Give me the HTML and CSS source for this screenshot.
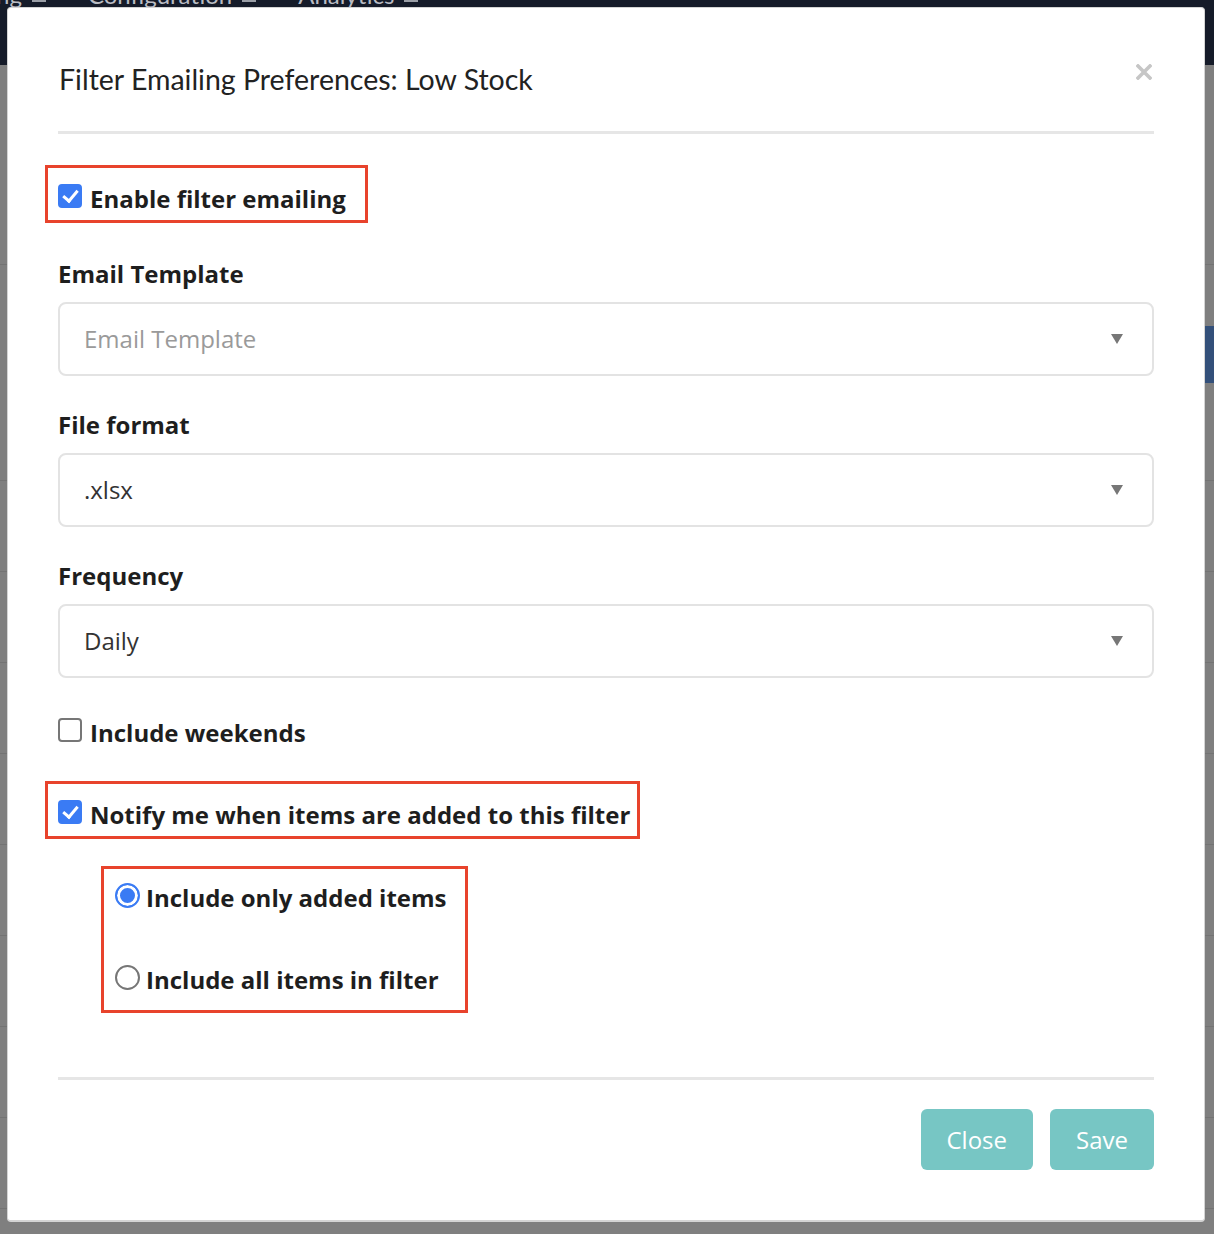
FILE: index.html
```html
<!DOCTYPE html>
<html lang="en">
<head>
<meta charset="utf-8">
<title>Filter Emailing Preferences</title>
<link rel="stylesheet" href="styles.css">
</head>
<body>
<div class="page">
  <div class="topnav">
    <span class="nav-item nav-first">ng <span class="caret"></span></span>
    <span class="nav-item">Configuration <span class="caret"></span></span>
    <span class="nav-item">Analytics <span class="caret"></span></span>
  </div>
  <div class="bg-content">
    <div class="bg-head"></div>
    <div class="bg-row bg-row-tall"><div class="bg-btn">/</div></div>
    <div class="bg-row"></div>
    <div class="bg-row"></div>
    <div class="bg-row"></div>
    <div class="bg-row"></div>
    <div class="bg-row"></div>
    <div class="bg-row"></div>
    <div class="bg-row"></div>
    <div class="bg-row"></div>
  </div>
</div>

<div class="modal" role="dialog">
  <div class="modal-header">
    <h4 class="modal-title">Filter Emailing Preferences: Low Stock</h4>
    <button class="modal-close" aria-label="Close">
      <svg width="16" height="16" viewBox="0 0 16 16"><path d="M2 2 L14 14 M14 2 L2 14" stroke="#c6c6c6" stroke-width="3.6" stroke-linecap="square"/></svg>
    </button>
  </div>
  <div class="divider"></div>

  <div class="modal-body">
    <div class="highlight hl-enable">
      <label class="check-row"><input type="checkbox" class="cb" checked> Enable filter emailing</label>
    </div>

    <div class="form-group first-group">
      <div class="field-label">Email Template</div>
      <div class="select"><span class="placeholder">Email Template</span><span class="arrow"></span></div>
    </div>

    <div class="form-group">
      <div class="field-label">File format</div>
      <div class="select"><span class="value">.xlsx</span><span class="arrow"></span></div>
    </div>

    <div class="form-group">
      <div class="field-label">Frequency</div>
      <div class="select"><span class="value">Daily</span><span class="arrow"></span></div>
    </div>

    <label class="check-row weekends"><input type="checkbox" class="cb"> Include weekends</label>

    <div class="highlight hl-notify">
      <label class="check-row"><input type="checkbox" class="cb" checked> Notify me when items are added to this filter</label>
    </div>

    <div class="highlight hl-radios">
      <label class="check-row radio-row"><input type="radio" name="mode" class="rb" checked> Include only added items</label>
      <label class="check-row radio-row second"><input type="radio" name="mode" class="rb"> Include all items in filter</label>
    </div>
  </div>

  <div class="divider footer-divider"></div>
  <div class="modal-footer">
    <button class="btn">Close</button>
    <button class="btn">Save</button>
  </div>
</div>
</body>
</html>
```

FILE: styles.css
```css
html, body {
  margin: 0;
  padding: 0;
}
body {
  width: 1214px;
  height: 1234px;
  overflow: hidden;
  background: #7f7f7f;
  font-family: "Open Sans", "Noto Sans", sans-serif;
  position: relative;
}
.page {
  height: 1234px;
  overflow: hidden;
}

/* background page (dimmed) */
.topnav {
  height: 65px;
  background: #151b29;
  display: flex;
  align-items: flex-start;
  overflow: hidden;
  font-family: Lato, "Open Sans", sans-serif;
  font-size: 24px;
  color: #b9bcc3;
  line-height: 24px;
}
.nav-item {
  margin-top: -17px;
  margin-right: 42px;
  white-space: nowrap;
  display: flex;
  align-items: center;
}
.nav-first { margin-left: -4px; }
.caret {
  display: inline-block;
  width: 14px;
  height: 2px;
  margin-left: 10px;
  margin-top: 12px;
  background: #9a9ea6;
}
.bg-content { display: flex; flex-direction: column; }
.bg-head { height: 199px; border-bottom: 1px solid #737373; }
.bg-row {
  height: 90px;
  border-bottom: 1px solid #737373;
  display: flex;
  justify-content: flex-end;
}
.bg-row-tall { height: 215px; }
.bg-btn {
  margin-top: 61px;
  width: 120px;
  height: 57px;
  margin-right: -20px;
  background: #33507a;
  color: #8c9ab0;
  font-size: 30px;
  line-height: 57px;
  padding-left: 4px;
  box-sizing: border-box;
}

/* modal */
.modal {
  position: absolute;
  top: 7px;
  left: 7px;
  width: 1198px;
  box-sizing: border-box;
  background: #fff;
  border: 1px solid #d4d4d4;
  border-bottom-width: 2px;
  border-radius: 4px;
  padding: 54px 50px 50px;
  color: #222;
}
.modal-header {
  display: flex;
  justify-content: space-between;
  align-items: flex-start;
}
.modal-title {
  margin: 0;
  font-family: Lato, "Open Sans", sans-serif;
  font-weight: 400;
  font-size: 28.5px;
  line-height: 34px;
  color: #222;
  padding-left: 1px;
}
.modal-close {
  border: 0;
  background: none;
  padding: 0;
  margin-top: 2px;
  margin-right: 2px;
  width: 16px;
  height: 16px;
  display: flex;
}
.divider {
  height: 3px;
  background: #e6e6e6;
  margin-top: 35px;
}

.modal-body {
  padding-top: 31px;
  display: flex;
  flex-direction: column;
  align-items: flex-start;
}
.highlight {
  border: 3px solid #e8432c;
  box-sizing: border-box;
}
.hl-enable {
  margin-left: -13px;
  padding: 16px 19px 6px 10px;
}
.hl-notify {
  margin-left: -13px;
  margin-top: 33px;
  padding: 16px 7px 6px 10px;
}
.hl-radios {
  margin-left: 43px;
  margin-top: 27px;
  padding: 14px 18px 15px 11px;
  display: flex;
  flex-direction: column;
}

.check-row {
  display: flex;
  align-items: flex-start;
  gap: 8px;
  font-weight: 700;
  font-size: 24px;
  line-height: 30px;
  color: #1e1e1e;
  white-space: nowrap;
}
.radio-row { gap: 6px; }
.radio-row.second { margin-top: 52px; }
.weekends { margin-top: 40px; }

.cb {
  appearance: none;
  -webkit-appearance: none;
  margin: 0;
  width: 24px;
  height: 24px;
  box-sizing: border-box;
  border: 2px solid #767676;
  border-radius: 4px;
  background: #fff;
  position: relative;
  flex: none;
}
.cb:checked {
  background: #3a7bf4;
  border-color: #3a7bf4;
}
.cb:checked::after {
  content: "";
  position: absolute;
  left: 6px;
  top: 1px;
  width: 6px;
  height: 12px;
  border-right: 3.5px solid #fff;
  border-bottom: 3.5px solid #fff;
  transform: rotate(40deg);
}
.rb {
  appearance: none;
  -webkit-appearance: none;
  margin: 0;
  width: 25px;
  height: 25px;
  box-sizing: border-box;
  border: 2px solid #767676;
  border-radius: 50%;
  background: #fff;
  flex: none;
}
.rb:checked {
  border-color: #3a7bf4;
  background: #3a7bf4;
  box-shadow: inset 0 0 0 3px #fff;
}

.form-group {
  display: flex;
  flex-direction: column;
  width: 100%;
  margin-top: 34.5px;
}
.first-group { margin-top: 36px; }
.field-label {
  font-weight: 700;
  font-size: 24px;
  line-height: 30px;
  color: #1e1e1e;
  margin-bottom: 12.5px;
}
.select {
  height: 74px;
  box-sizing: border-box;
  border: 2px solid #e3e3e3;
  border-radius: 8px;
  display: flex;
  align-items: center;
  justify-content: space-between;
  padding: 0 29px 0 24px;
  font-size: 24px;
}
.placeholder { color: #9a9a9a; }
.value { color: #333; }
.arrow {
  width: 0;
  height: 0;
  border-left: 6px solid transparent;
  border-right: 6px solid transparent;
  border-top: 10px solid #777;
}

.footer-divider { margin-top: 64px; }
.modal-footer {
  display: flex;
  justify-content: flex-end;
  gap: 17px;
  margin-top: 29px;
}
.btn {
  height: 61px;
  padding: 0 26px;
  border: 0;
  border-radius: 6px;
  background: #77c6c4;
  color: #fff;
  font-family: "Open Sans", "Noto Sans", sans-serif;
  font-size: 24px;
}
```
